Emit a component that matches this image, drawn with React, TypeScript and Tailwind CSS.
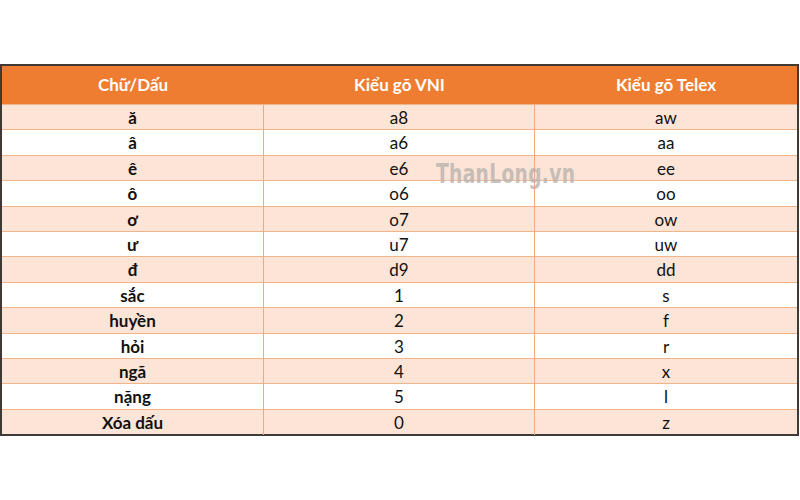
import React from "react";

type Row = { key: string; vni: string; telex: string };

const rows: Row[] = [
  { key: "ă", vni: "a8", telex: "aw" },
  { key: "â", vni: "a6", telex: "aa" },
  { key: "ê", vni: "e6", telex: "ee" },
  { key: "ô", vni: "o6", telex: "oo" },
  { key: "ơ", vni: "o7", telex: "ow" },
  { key: "ư", vni: "u7", telex: "uw" },
  { key: "đ", vni: "d9", telex: "dd" },
  { key: "sắc", vni: "1", telex: "s" },
  { key: "huyền", vni: "2", telex: "f" },
  { key: "hỏi", vni: "3", telex: "r" },
  { key: "ngã", vni: "4", telex: "x" },
  { key: "nặng", vni: "5", telex: "l" },
  { key: "Xóa dấu", vni: "0", telex: "z" },
];

export default function App() {
  return (
    <div className="w-[800px] h-[500px] bg-white pt-[64px] font-['Lato','Noto_Sans',sans-serif]">
      <div className="relative w-[799px] border-2 border-[#3f3a36]">
        {/* HEADER */}
        <div className="grid grid-cols-[262px_271px_1fr] h-[38px] bg-[#ee7d31] text-white font-bold text-[17px]">
          <div className="flex items-center justify-center">Chữ/Dấu</div>
          <div className="flex items-center justify-center">Kiểu gõ VNI</div>
          <div className="flex items-center justify-center">Kiểu gõ Telex</div>
        </div>

        {/* BODY */}
        {rows.map((r, i) => (
          <div
            key={i}
            className={
              "grid grid-cols-[262px_271px_1fr] h-[25.4px] text-[17px] text-[#111] border-t border-[#f4b48a] " +
              (i % 2 === 0 ? "bg-[#fce4d6]" : "bg-white")
            }
          >
            <div className="flex items-center justify-center font-bold border-r border-[#f1a982]">
              {r.key}
            </div>
            <div className="flex items-center justify-center border-r border-[#f1a982]">
              {r.vni}
            </div>
            <div className="flex items-center justify-center">{r.telex}</div>
          </div>
        ))}

        {/* WATERMARK */}
        <div className="absolute left-[434px] top-[88px] text-[27px] font-bold tracking-[0.5px] text-[#b9b2ae]/80 pointer-events-none font-['DejaVu_Sans',sans-serif] scale-x-[0.69] origin-left">
          ThanLong.vn
        </div>
      </div>
    </div>
  );
}
